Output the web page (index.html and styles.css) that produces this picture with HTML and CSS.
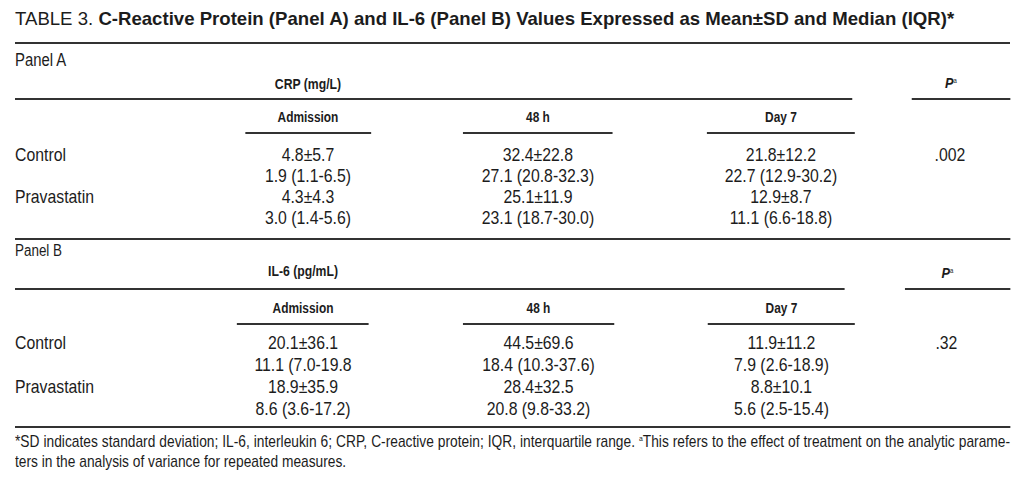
FILE: index.html
```html
<!DOCTYPE html>
<html lang="en">
<head>
<meta charset="utf-8">
<title>Table 3</title>
<link rel="stylesheet" href="styles.css">
</head>
<body>
<div class="page">
  <h1 class="title"><span class="title-num">TABLE 3.</span> <strong>C-Reactive Protein (Panel A) and IL-6 (Panel B) Values Expressed as Mean±SD and Median (IQR)*</strong></h1>

  <div class="sheet">
    <section class="panel panel-a">
      <div class="panel-name">Panel A</div>
      <div class="grid head1">
        <div class="rule-wide"></div>
        <div class="measure">CRP (mg/L)</div>
        <div class="pcol"><span class="p-label"><i>P</i><sup>a</sup></span></div>
      </div>
      <div class="grid head2">
        <div class="time c2">Admission</div>
        <div class="time c4">48 h</div>
        <div class="time c6">Day 7</div>
      </div>
      <div class="grid body">
        <div class="label">Control</div><div class="val c2">4.8±5.7</div><div class="val c4">32.4±22.8</div><div class="val c6">21.8±12.2</div><div class="val c8"><span class="pval">.002</span></div>
        <div class="val c2">1.9 (1.1-6.5)</div><div class="val c4">27.1 (20.8-32.3)</div><div class="val c6">22.7 (12.9-30.2)</div>
        <div class="label">Pravastatin</div><div class="val c2">4.3±4.3</div><div class="val c4">25.1±11.9</div><div class="val c6">12.9±8.7</div>
        <div class="val c2">3.0 (1.4-5.6)</div><div class="val c4">23.1 (18.7-30.0)</div><div class="val c6">11.1 (6.6-18.8)</div>
      </div>
    </section>

    <section class="panel panel-b">
      <div class="panel-name">Panel B</div>
      <div class="grid head1">
        <div class="rule-wide"></div>
        <div class="measure">IL-6 (pg/mL)</div>
        <div class="pcol"><span class="p-label"><i>P</i><sup>a</sup></span></div>
      </div>
      <div class="grid head2">
        <div class="time c2">Admission</div>
        <div class="time c4">48 h</div>
        <div class="time c6">Day 7</div>
      </div>
      <div class="grid body">
        <div class="label">Control</div><div class="val c2">20.1±36.1</div><div class="val c4">44.5±69.6</div><div class="val c6">11.9±11.2</div><div class="val c8"><span class="pval">.32</span></div>
        <div class="val c2">11.1 (7.0-19.8</div><div class="val c4">18.4 (10.3-37.6)</div><div class="val c6">7.9 (2.6-18.9)</div>
        <div class="label">Pravastatin</div><div class="val c2">18.9±35.9</div><div class="val c4">28.4±32.5</div><div class="val c6">8.8±10.1</div>
        <div class="val c2">8.6 (3.6-17.2)</div><div class="val c4">20.8 (9.8-33.2)</div><div class="val c6">5.6 (2.5-15.4)</div>
      </div>
    </section>

    <p class="footnote"><span class="fn-line">*SD indicates standard deviation; IL-6, interleukin 6; CRP, C-reactive protein; IQR, interquartile range. <sup>a</sup>This refers to the effect of treatment on the analytic parame-</span><span class="fn-line2">ters in the analysis of variance for repeated measures.</span></p>
  </div>
</div>
</body>
</html>
```

FILE: styles.css
```css
html, body {
  margin: 0;
  padding: 0;
  background: #ffffff;
  overflow: hidden;
}

.page {
  padding: 8px 14px 0 15px;
  color: #1c1c1c;
  font-family: "Liberation Sans", Arial, sans-serif;
}

.title {
  margin: 0;
  padding-bottom: 12px;
  border-bottom: 2px solid #333;
  font-size: 18.6px;
  line-height: 22px;
  font-weight: normal;
  white-space: nowrap;
}

.title strong {
  font-weight: bold;
}

/* The table body is set in a condensed face: Arial horizontally compressed */
.sheet {
  width: 1170.6px;
  transform: scaleX(0.85);
  transform-origin: 0 0;
}

.grid {
  display: grid;
}

.panel-a .grid {
  grid-template-columns: 270.6px 148.2px 108.2px 176.5px 110.6px 174.1px 67.1px 115.3px;
}

.panel-b .grid {
  grid-template-columns: 261.2px 155.3px 110.6px 177.6px 110.6px 172.9px 58.8px 123.6px;
}

.panel-name {
  font-size: 17.5px;
  line-height: 20px;
  margin-top: 6px;
}

.panel-b .panel-name {
  font-size: 15.8px;
  line-height: 16px;
  margin-top: 3px;
}

/* header row 1: measure name + P */
.head1 {
  grid-template-rows: 30px;
}

.panel-b .head1 {
  grid-template-rows: 31px;
}

.rule-wide {
  grid-column: 1 / 7;
  grid-row: 1;
  border-bottom: 2px solid #333;
}

.panel-a .rule-wide {
  margin-right: 3.5px;
}

.panel-b .rule-wide {
  margin-right: 11.8px;
}

.measure {
  grid-column: 2;
  grid-row: 1;
  align-self: start;
  text-align: center;
  white-space: nowrap;
  font-weight: bold;
  font-size: 14.4px;
  line-height: 20px;
  padding-top: 4px;
}

.panel-b .measure {
  padding-top: 3px;
  line-height: 18px;
}

.pcol {
  grid-column: 8;
  grid-row: 1;
  border-bottom: 2px solid #333;
  text-align: center;
  padding-right: 23.5px;
  padding-top: 3px;
  line-height: 20px;
}

.panel-b .pcol {
  padding-top: 4px;
}

.p-label i {
  font-weight: bold;
  font-style: italic;
  font-size: 15px;
}

.p-label sup {
  font-size: 7px;
  vertical-align: 5px;
  line-height: 0;
}

/* header row 2: time points */
.time {
  font-weight: bold;
  font-size: 14px;
  line-height: 20px;
  text-align: center;
  white-space: nowrap;
  padding: 7px 0 5px;
  border-bottom: 2px solid #333;
}

.panel-b .time {
  padding-top: 8px;
}

.c2 { grid-column: 2; }
.c4 { grid-column: 4; }
.c6 { grid-column: 6; }
.c8 { grid-column: 8; }

/* body */
.body {
  padding: 10px 0;
  border-bottom: 2px solid #333;
  font-size: 18.6px;
  line-height: 21px;
}

.panel-b .body {
  padding: 7px 0 6px;
  line-height: 22px;
}

.label {
  grid-column: 1;
  white-space: nowrap;
}

.val {
  text-align: center;
  white-space: nowrap;
}

.c8.val {
  padding-right: 26px;
}

/* footnote */
.footnote {
  margin: 3px 0 0;
  font-size: 16.2px;
  line-height: 20px;
}

.fn-line {
  display: block;
  white-space: nowrap;
  text-align: justify;
  text-align-last: justify;
}

.footnote sup {
  font-size: 8px;
  vertical-align: 6px;
  line-height: 0;
}
```
